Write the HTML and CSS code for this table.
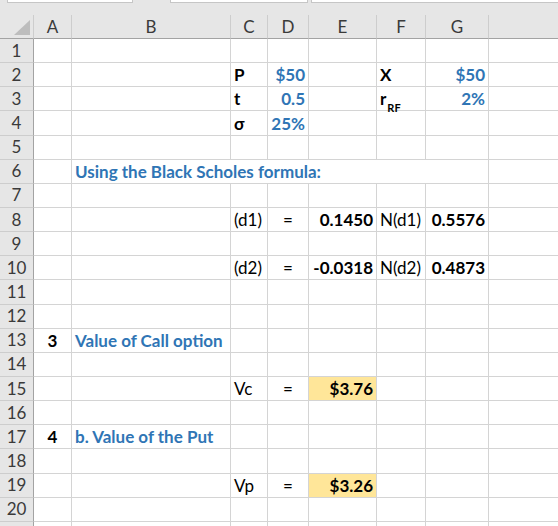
FILE: index.html
```html
<!DOCTYPE html>
<html lang="en">
<head>
<meta charset="utf-8">
<title>Black Scholes</title>
<link rel="stylesheet" href="styles.css">
</head>
<body>
<div class="topbar">
  <div class="box box-name"></div>
  <div class="box box-mid"></div>
  <div class="box box-formula"></div>
</div>
<div class="sheet">
  <div class="row head">
    <div class="hc corner"><span class="tri"></span></div>
    <div class="hc">A</div><div class="hc">B</div><div class="hc">C</div><div class="hc">D</div><div class="hc">E</div><div class="hc">F</div><div class="hc">G</div><div class="hc"></div>
  </div>
  <div class="row"><div class="rh">1</div><div class="c"></div><div class="c"></div><div class="c"></div><div class="c"></div><div class="c"></div><div class="c"></div><div class="c"></div><div class="c"></div></div>
  <div class="row"><div class="rh">2</div><div class="c"></div><div class="c"></div><div class="c b">P</div><div class="c r blue">$50</div><div class="c"></div><div class="c b">X</div><div class="c r blue">$50</div><div class="c"></div></div>
  <div class="row"><div class="rh">3</div><div class="c"></div><div class="c"></div><div class="c b">t</div><div class="c r blue">0.5</div><div class="c"></div><div class="c b">r<sub class="sub">RF</sub></div><div class="c r blue">2%</div><div class="c"></div></div>
  <div class="row"><div class="rh">4</div><div class="c"></div><div class="c"></div><div class="c b">σ</div><div class="c r blue">25%</div><div class="c"></div><div class="c"></div><div class="c"></div><div class="c"></div></div>
  <div class="row"><div class="rh">5</div><div class="c"></div><div class="c"></div><div class="c"></div><div class="c"></div><div class="c"></div><div class="c"></div><div class="c"></div><div class="c"></div></div>
  <div class="row"><div class="rh">6</div><div class="c"></div><div class="c span6 blue">Using the Black Scholes formula:</div><div class="c"></div></div>
  <div class="row"><div class="rh">7</div><div class="c"></div><div class="c"></div><div class="c"></div><div class="c"></div><div class="c"></div><div class="c"></div><div class="c"></div><div class="c"></div></div>
  <div class="row"><div class="rh">8</div><div class="c"></div><div class="c"></div><div class="c">(d1)</div><div class="c ctr">=</div><div class="c r b">0.1450</div><div class="c">N(d1)</div><div class="c r b">0.5576</div><div class="c"></div></div>
  <div class="row"><div class="rh">9</div><div class="c"></div><div class="c"></div><div class="c"></div><div class="c"></div><div class="c"></div><div class="c"></div><div class="c"></div><div class="c"></div></div>
  <div class="row"><div class="rh">10</div><div class="c"></div><div class="c"></div><div class="c">(d2)</div><div class="c ctr">=</div><div class="c r b">-0.0318</div><div class="c">N(d2)</div><div class="c r b">0.4873</div><div class="c"></div></div>
  <div class="row"><div class="rh">11</div><div class="c"></div><div class="c"></div><div class="c"></div><div class="c"></div><div class="c"></div><div class="c"></div><div class="c"></div><div class="c"></div></div>
  <div class="row"><div class="rh">12</div><div class="c"></div><div class="c"></div><div class="c"></div><div class="c"></div><div class="c"></div><div class="c"></div><div class="c"></div><div class="c"></div></div>
  <div class="row"><div class="rh">13</div><div class="c ctr b">3</div><div class="c blue">Value of Call option</div><div class="c"></div><div class="c"></div><div class="c"></div><div class="c"></div><div class="c"></div><div class="c"></div></div>
  <div class="row"><div class="rh">14</div><div class="c"></div><div class="c"></div><div class="c"></div><div class="c"></div><div class="c"></div><div class="c"></div><div class="c"></div><div class="c"></div></div>
  <div class="row"><div class="rh">15</div><div class="c"></div><div class="c"></div><div class="c">Vc</div><div class="c ctr">=</div><div class="c r b fill">$3.76</div><div class="c"></div><div class="c"></div><div class="c"></div></div>
  <div class="row"><div class="rh">16</div><div class="c"></div><div class="c"></div><div class="c"></div><div class="c"></div><div class="c"></div><div class="c"></div><div class="c"></div><div class="c"></div></div>
  <div class="row"><div class="rh">17</div><div class="c ctr b">4</div><div class="c blue">b. Value of the Put</div><div class="c"></div><div class="c"></div><div class="c"></div><div class="c"></div><div class="c"></div><div class="c"></div></div>
  <div class="row"><div class="rh">18</div><div class="c"></div><div class="c"></div><div class="c"></div><div class="c"></div><div class="c"></div><div class="c"></div><div class="c"></div><div class="c"></div></div>
  <div class="row"><div class="rh">19</div><div class="c"></div><div class="c"></div><div class="c">Vp</div><div class="c ctr">=</div><div class="c r b fill">$3.26</div><div class="c"></div><div class="c"></div><div class="c"></div></div>
  <div class="row"><div class="rh">20</div><div class="c"></div><div class="c"></div><div class="c"></div><div class="c"></div><div class="c"></div><div class="c"></div><div class="c"></div><div class="c"></div></div>
  <div class="row"><div class="rh"></div><div class="c"></div><div class="c"></div><div class="c"></div><div class="c"></div><div class="c"></div><div class="c"></div><div class="c"></div><div class="c"></div></div>
</div>
</body>
</html>
```

FILE: styles.css
```css
* { box-sizing: border-box; }
html, body { margin: 0; padding: 0; }
body {
  width: 558px;
  height: 526px;
  overflow: hidden;
  background: #fff;
  font-family: Lato, "Open Sans", sans-serif;
  font-size: 17px;
  color: #000;
}

.topbar {
  height: 15px;
  background: #e6e6e6;
  display: flex;
  align-items: flex-start;
  padding-left: 7px;
}
.box {
  height: 3px;
  background: #fff;
  border: 1px solid #c6c6c6;
  border-top: 0;
}
.box-name { width: 126px; }
.box-mid { width: 138px; margin-left: 37px; }
.box-formula { flex: 1; margin-left: 3px; border-right: 0; }

.sheet { width: 100%; }

.row {
  display: grid;
  grid-template-columns: 34px 38px 159px 37px 41px 68px 49px 63px 1fr;
  height: 24.15px;
}
.row.head { height: 24px; }

.hc {
  background: #e6e6e6;
  border-right: 1px solid #cdcdcd;
  border-bottom: 1px solid #a3a3a3;
  display: flex;
  align-items: center;
  justify-content: center;
  color: #3a3a3a;
  line-height: 20px;
}
.corner {
  justify-content: flex-end;
  align-items: flex-end;
  padding: 0 3px 3px 0;
}
.tri {
  width: 0;
  height: 0;
  border-left: 16px solid transparent;
  border-bottom: 15px solid #bdbdbd;
}

.rh {
  background: #e6e6e6;
  border-right: 1px solid #a3a3a3;
  border-bottom: 1px solid #cdcdcd;
  display: flex;
  align-items: center;
  justify-content: center;
  color: #3a3a3a;
  line-height: 20px;
}

.c {
  border-right: 1px solid #d4d4d4;
  border-bottom: 1px solid #d4d4d4;
  display: flex;
  align-items: flex-end;
  padding: 0 3px 1px;
  line-height: 20px;
  white-space: nowrap;
}
.row > :last-child { border-right: 0; }
.span6 { grid-column: span 6; }
.r { justify-content: flex-end; }
.ctr { justify-content: center; }
.b { font-weight: 700; }
.blue { font-weight: 700; color: #2f75b5; }
.fill { background: #ffe699; }
.sub {
  font-size: 11px;
  line-height: 10px;
  position: relative;
  top: 4px;
  vertical-align: baseline;
  margin-left: 1px;
}
```
